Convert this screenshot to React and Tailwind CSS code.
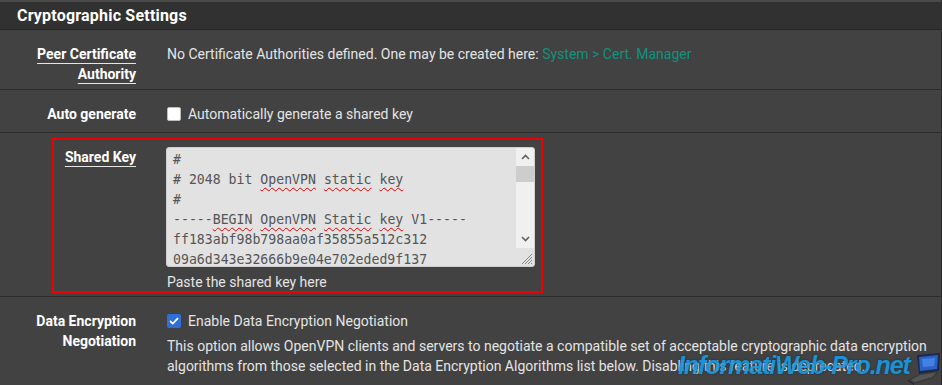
import React from "react";

const Sp = ({ children }) => (
  <span className="underline decoration-wavy decoration-[#e00000] decoration-1 underline-offset-[3px]">{children}</span>
);

function Label({ children }) {
  return (
    <div className="w-[136px] shrink-0 text-right font-bold text-white text-[14px] leading-[20px]">
      {children}
    </div>
  );
}

function ULabel({ children }) {
  return (
    <span className="underline decoration-1 underline-offset-[4px] decoration-[#e6e6e6]">{children}</span>
  );
}

function Laptop() {
  return (
    <svg width="34" height="32" viewBox="0 0 34 32">
      <polygon points="9,2 32,0 31,18 11,21" fill="#1b2a4a" />
      <polygon points="11,4 30,2 29,16 12,18" fill="#2a62c8" />
      <polygon points="14,6 27,5 26,13 15,14" fill="#5fa0ff" opacity="0.5" />
      <polygon points="0,27 11,21 31,18 26,25 6,31" fill="#3b3b3b" />
      <polygon points="3,27 12,22 28,19.5 24,24 7,29" fill="#555" />
      <polygon points="0,27 6,31 6,32 0,28" fill="#222" />
    </svg>
  );
}

export default function App() {
  return (
    <div className="w-[942px] h-[385px] overflow-hidden bg-[#424242] relative font-['Roboto',sans-serif] text-[#e4e4e4] border-r border-[#2e2e2e]">
      {/* header */}
      <div className="h-[30px] bg-[#313131] border-t-2 border-t-[#4a4a4a] border-b border-b-[#262626] pl-[17px] flex items-center">
        <span className="text-white font-bold text-[16px] tracking-[0.2px]">Cryptographic Settings</span>
      </div>

      {/* row 1 */}
      <div className="h-[60px] border-b border-[#2c2c2c] flex pt-[14px]">
        <Label>
          <ULabel>Peer Certificate</ULabel>
          <br />
          <ULabel>Authority</ULabel>
        </Label>
        <div className="ml-[31px] text-[14px] leading-[20px]">
          No Certificate Authorities defined. One may be created here:{" "}
          <span className="text-[#11917d]">System &gt; Cert. Manager</span>
        </div>
      </div>

      {/* row 2 */}
      <div className="h-[43px] border-b border-[#2c2c2c] flex pt-[14px]">
        <Label>Auto generate</Label>
        <div className="ml-[31px] flex items-center h-[20px] text-[14px]">
          <div className="w-[14px] h-[14px] bg-white border border-[#bdbdbd] rounded-[2px]" />
          <span className="ml-[7px]">Automatically generate a shared key</span>
        </div>
      </div>

      {/* row 3 */}
      <div className="h-[164px] border-b border-[#2c2c2c] flex pt-[14px] relative">
        <Label>
          <ULabel>Shared Key</ULabel>
        </Label>
        <div className="ml-[30px] flex flex-col">
          <div className="w-[369px] h-[120px] bg-[#e2e2e2] rounded-[3px] border border-[#cfcfcf] flex overflow-hidden">
            <div className="flex-1 pl-[6px] pt-[2px] font-['DejaVu_Sans_Mono',monospace] text-[13.2px] leading-[20px] text-[#555] whitespace-pre overflow-hidden">
              <div>#</div>
              <div># 2048 bit <Sp>OpenVPN</Sp> <Sp>static</Sp> <Sp>key</Sp></div>
              <div>#</div>
              <div>-----<Sp>BEGIN</Sp> <Sp>OpenVPN</Sp> <Sp>Static</Sp> <Sp>key</Sp> V1-----</div>
              <div>ff183abf98b798aa0af35855a512c312</div>
              <div>09a6d343e32666b9e04e702eded9f137</div>
            </div>
            <div className="w-[18px] flex flex-col">
              <div className="h-[100px] bg-[#f0f0f0] flex flex-col">
                <div className="h-[18px] flex items-center justify-center">
                  <svg width="9" height="6" viewBox="0 0 9 6"><path d="M1 5 L4.5 1.5 L8 5" stroke="#606060" strokeWidth="1.6" fill="none" /></svg>
                </div>
                <div className="h-[16px] bg-[#cdcdcd]" />
                <div className="flex-1" />
                <div className="h-[18px] flex items-center justify-center">
                  <svg width="9" height="6" viewBox="0 0 9 6"><path d="M1 1 L4.5 4.5 L8 1" stroke="#606060" strokeWidth="1.6" fill="none" /></svg>
                </div>
              </div>
              <div className="flex-1 flex items-end justify-end pr-[1px] pb-[1px]">
                <svg width="14" height="14" viewBox="0 0 14 14">
                  <path d="M13 3 L3 13 M13 6 L6 13 M13 9 L9 13 M13 12 L12 13" stroke="#8a8a8a" strokeWidth="1" />
                </svg>
              </div>
            </div>
          </div>
          <div className="mt-[5px] text-[14px] leading-[20px] pl-[1px]">Paste the shared key here</div>
        </div>
        <div className="absolute left-[52px] top-[5px] w-[491px] h-[155px] border-2 border-[#ee0000] pointer-events-none" />
      </div>

      {/* row 4 */}
      <div className="flex pt-[14px]">
        <Label>
          Data Encryption
          <br />
          Negotiation
        </Label>
        <div className="ml-[31px] flex flex-col text-[14px] leading-[20px]">
          <div className="flex items-center h-[20px]">
            <div className="w-[14px] h-[14px] bg-[#2f6fd8] rounded-[2px] flex items-center justify-center">
              <svg width="10" height="8" viewBox="0 0 10 8"><path d="M1 4 L3.8 6.6 L9 1.2" stroke="white" strokeWidth="1.8" fill="none" /></svg>
            </div>
            <span className="ml-[7px]">Enable Data Encryption Negotiation</span>
          </div>
          <div className="mt-[5px] whitespace-nowrap">
            This option allows OpenVPN clients and servers to negotiate a compatible set of acceptable cryptographic data encryption
            <br />
            algorithms from those selected in the Data Encryption Algorithms list below. Disabling this feature is deprecated.
          </div>
        </div>
      </div>

      {/* watermark */}
      <div className="absolute left-[678px] top-[350px] pointer-events-none whitespace-nowrap">
        <span className="font-['Liberation_Sans',sans-serif] font-bold italic text-[25px] leading-[30px] text-[#1b9be0] opacity-90 tracking-[-1.1px] [text-shadow:0_0_2px_#0a2a4a]">
          InformatiWeb-Pro.net
        </span>
      </div>
      <div className="absolute left-[908px] top-[353px] pointer-events-none">
        <Laptop />
      </div>
    </div>
  );
}
